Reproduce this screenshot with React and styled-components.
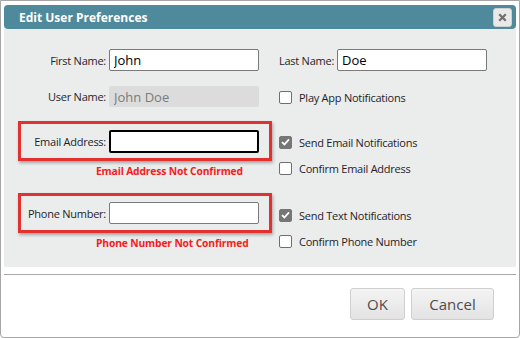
import React from 'react';
import styled, {createGlobalStyle} from 'styled-components';

const GlobalStyle = createGlobalStyle`
    html, body {
        margin: 0;
        padding: 0;
        background: #fff;
    }
    body {
        font-family: "Open Sans", "Noto Sans", sans-serif;
        font-size: 11px;
        letter-spacing: -0.25px;
        color: #222;
    }
`;

const Dialog = styled.div`
    width: 520px;
    height: 338px;
    box-sizing: border-box;
    border: 1px solid #a6a6a6;
    border-radius: 0 0 4px 4px;
    padding: 4px 3px 0 3px;
    background: #fff;
    display: flex;
    flex-direction: column;
`;

const TitleBar = styled.div`
    height: 24px;
    background: #4e8a9b;
    border-radius: 4px;
    display: flex;
    align-items: center;
    justify-content: space-between;
    padding: 0 4px 0 15px;
`;

const Title = styled.h1`
    margin: 0;
    font-size: 12px;
    font-weight: 700;
    color: #fff;
    letter-spacing: 0;
`;

const CloseButton = styled.button`
    width: 19px;
    height: 19px;
    padding: 0;
    border: 1px solid #d0d0d0;
    border-radius: 3px;
    background: #e9e9e9;
    display: flex;
    align-items: center;
    justify-content: center;
`;

const Body = styled.div`
    height: 238px;
    box-sizing: border-box;
    background: #ebecec;
    padding: 20px 0 0 14px;
    display: flex;
    flex-direction: column;
`;

const Section = styled.div`
    display: flex;
    margin-top: ${p => p.$top || 0}px;
`;

const LeftCol = styled.div`
    width: 254px;
    flex: none;
    margin-right: 7px;
`;

const RightCol = styled.div`
    display: flex;
    flex-direction: column;
    gap: ${p => p.$gap || 0}px;
    padding-top: ${p => p.$top || 0}px;
`;

const FieldBox = styled.div`
    display: flex;
    align-items: center;
    box-sizing: border-box;
    height: ${p => (p.$highlight ? '40px' : 'auto')};
    border: ${p => (p.$highlight ? '3px solid #e2312f' : 'none')};
    padding-left: ${p => (p.$highlight || p.$flush ? 0 : 3)}px;
    box-shadow: ${p => (p.$highlight ? '1px 2px 3px rgba(0,0,0,0.3)' : 'none')};
`;

const Label = styled.label`
    width: ${p => p.$width || 85}px;
    flex: none;
    text-align: right;
    margin-right: 3px;
    white-space: nowrap;
    color: #1e1e2a;
`;

const TextInput = styled.input`
    width: 150px;
    height: ${p => (p.$focused ? '23px' : '22px')};
    box-sizing: border-box;
    margin: 0;
    padding: 0 4px;
    font-family: "Open Sans", "Noto Sans", sans-serif;
    font-size: 13px;
    letter-spacing: 0;
    color: #000;
    background: #fff;
    border: ${p => (p.$focused ? '2px solid #000' : '1px solid #7a7a7a')};
    border-radius: 2px;
    outline: none;
    &:disabled {
        background: #dcdcdc;
        border-color: #dcdcdc;
        color: #7b7b7b;
        height: 21px;
    }
`;

const ErrorText = styled.div`
    margin: 2px 0 0 78px;
    height: 16px;
    line-height: 16px;
    font-size: 10.3px;
    font-weight: 700;
    letter-spacing: -0.15px;
    color: #f41c1c;
    white-space: nowrap;
`;

const CheckRow = styled.label`
    display: flex;
    align-items: center;
    height: 16px;
    color: #1e1e2a;
    white-space: nowrap;
`;

const Box = styled.span`
    width: 13px;
    height: 13px;
    box-sizing: border-box;
    flex: none;
    margin-right: 7px;
    border-radius: 2px;
    border: 1px solid ${p => (p.$checked ? '#767676' : '#6e6e6e')};
    background: ${p => (p.$checked ? '#767676' : '#fff')};
    display: flex;
    align-items: center;
    justify-content: center;
`;

const Divider = styled.div`
    margin-top: 7px;
    border-top: 1px solid #a9a9a9;
`;

const Footer = styled.div`
    display: flex;
    justify-content: flex-end;
    gap: 6px;
    padding: 13px 22px 0 0;
`;

const Button = styled.button`
    height: 32px;
    min-width: ${p => p.$width}px;
    box-sizing: border-box;
    border: 1px solid #cfcfcf;
    border-radius: 3px;
    background: linear-gradient(#f4f4f4, #e3e3e3);
    font-family: "Open Sans", "Noto Sans", sans-serif;
    font-size: 15px;
    color: #4d4d4d;
    padding: 0 12px;
`;

const Check = ({checked, children}) => (
    <CheckRow>
        <Box $checked={checked}>
            {checked && (
                <svg width="9" height="8" viewBox="0 0 9 8">
                    <path d="M1 4.2 L3.4 6.5 L8 1.3" fill="none" stroke="#fff" strokeWidth="1.8" />
                </svg>
            )}
        </Box>
        {children}
    </CheckRow>
);

export default function App() {
    return (
        <>
            <GlobalStyle />
            <Dialog>
                <TitleBar>
                    <Title>Edit User Preferences</Title>
                    <CloseButton aria-label="Close">
                        <svg width="9" height="9" viewBox="0 0 9 9">
                            <path d="M1.2 1.2 L7.8 7.8 M7.8 1.2 L1.2 7.8" stroke="#707070" strokeWidth="2.2" />
                        </svg>
                    </CloseButton>
                </TitleBar>
                <Body>
                    <Section>
                        <LeftCol>
                            <FieldBox>
                                <Label>First Name:</Label>
                                <TextInput defaultValue="John" />
                            </FieldBox>
                        </LeftCol>
                        <FieldBox $flush>
                            <Label $width={55}>Last Name:</Label>
                            <TextInput defaultValue="Doe" />
                        </FieldBox>
                    </Section>
                    <Section $top={15}>
                        <LeftCol>
                            <FieldBox>
                                <Label>User Name:</Label>
                                <TextInput defaultValue="John Doe" disabled />
                            </FieldBox>
                        </LeftCol>
                        <RightCol $top={3}>
                            <Check>Play App Notifications</Check>
                        </RightCol>
                    </Section>
                    <Section $top={14}>
                        <LeftCol>
                            <FieldBox $highlight>
                                <Label>Email Address:</Label>
                                <TextInput $focused />
                            </FieldBox>
                            <ErrorText>Email Address Not Confirmed</ErrorText>
                        </LeftCol>
                        <RightCol $top={13} $gap={10}>
                            <Check checked>Send Email Notifications</Check>
                            <Check>Confirm Email Address</Check>
                        </RightCol>
                    </Section>
                    <Section $top={14}>
                        <LeftCol>
                            <FieldBox $highlight>
                                <Label>Phone Number:</Label>
                                <TextInput />
                            </FieldBox>
                            <ErrorText>Phone Number Not Confirmed</ErrorText>
                        </LeftCol>
                        <RightCol $top={14} $gap={10}>
                            <Check checked>Send Text Notifications</Check>
                            <Check>Confirm Phone Number</Check>
                        </RightCol>
                    </Section>
                </Body>
                <Divider />
                <Footer>
                    <Button $width={55}>OK</Button>
                    <Button $width={83}>Cancel</Button>
                </Footer>
            </Dialog>
        </>
    );
}
